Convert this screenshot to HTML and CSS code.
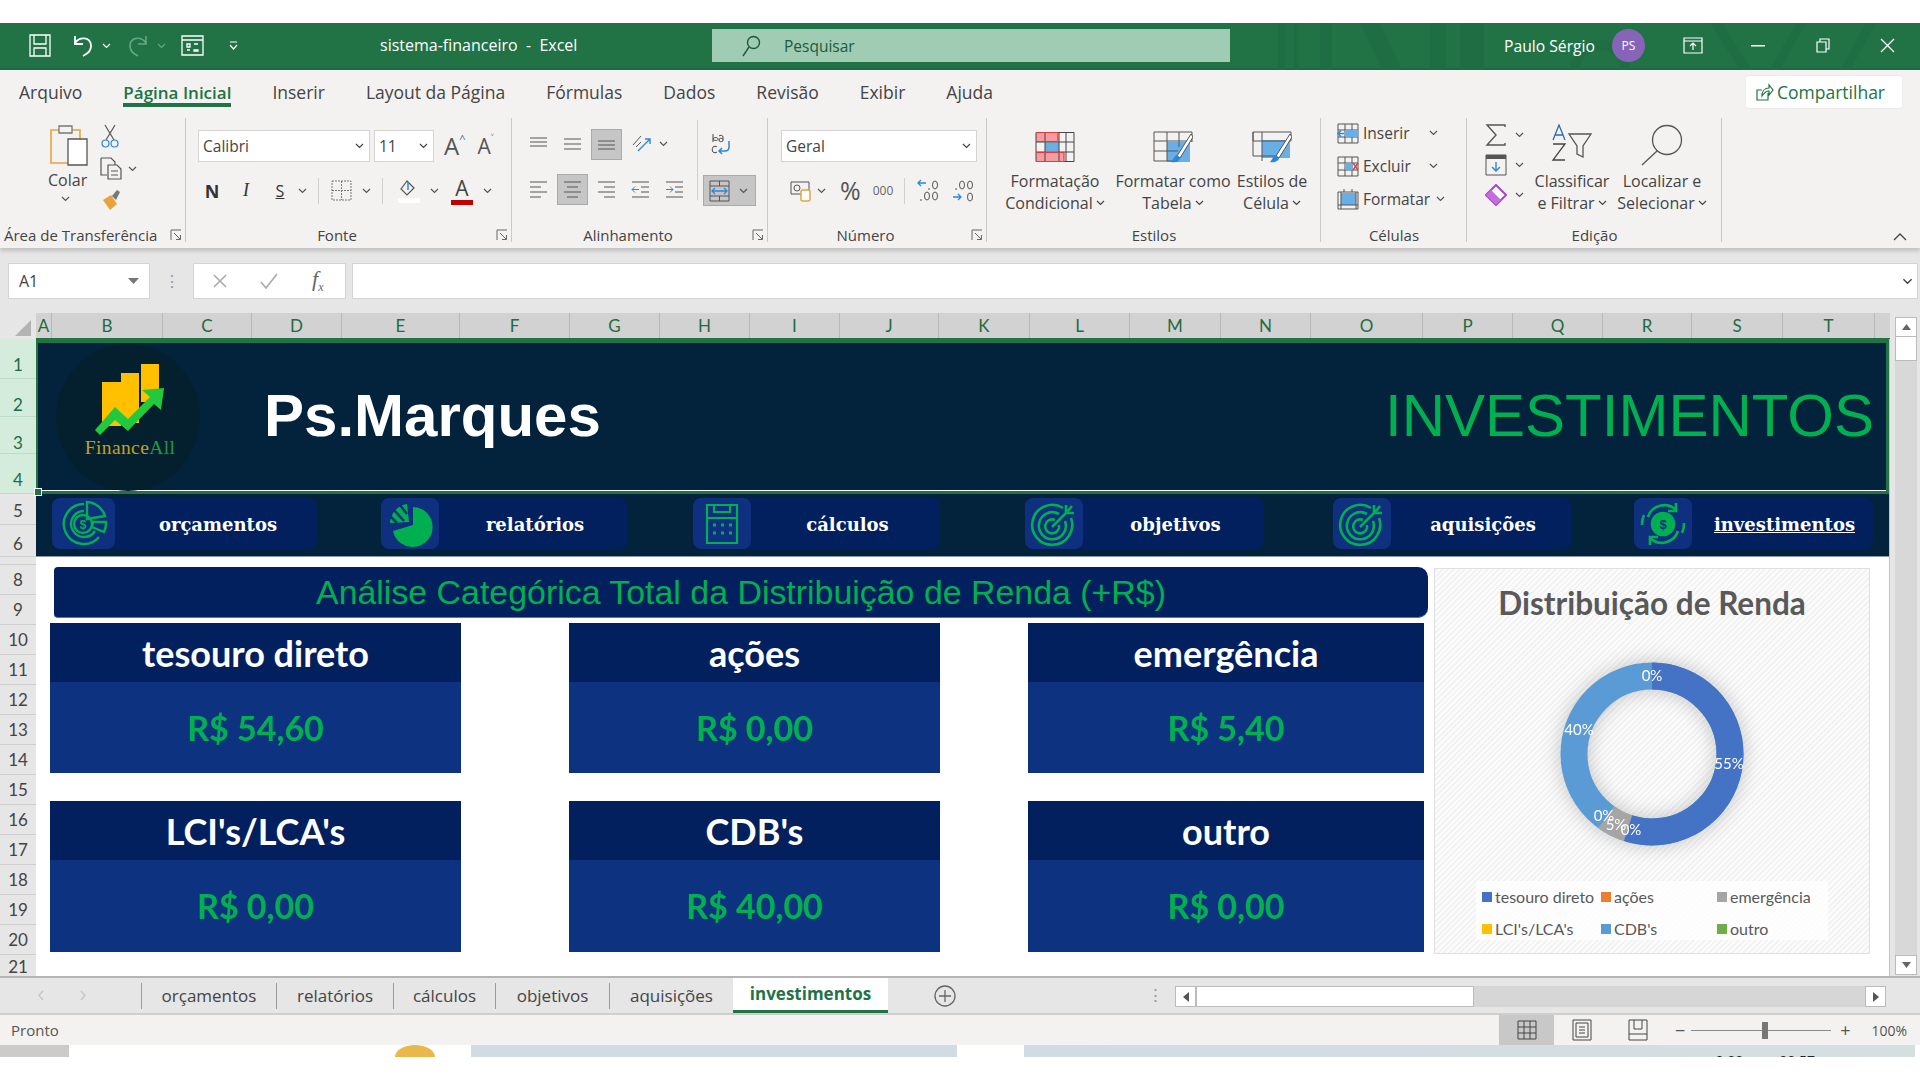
FILE: index.html
```html
<!DOCTYPE html>
<html lang="pt-BR">
<head>
  <meta charset="UTF-8">
  <title>sistema-financeiro - Excel</title>
  <link rel="stylesheet" href="styles.css">
</head>
<body>
  <svg class="sprite">
    <symbol id="car" viewBox="0 0 9 6"><path d="M1 1l3.5 3.5L8 1" fill="none" stroke="currentColor" stroke-width="1.2"/></symbol>
    <symbol id="launch" viewBox="0 0 12 12"><path d="M1 11V1h10M4 4l6 6M6 10.500h4.500V6" fill="none" stroke="#666" stroke-width="1"/></symbol>
    <symbol id="target" viewBox="0 0 48 48">
      <g fill="none" stroke="#00b050" stroke-width="2.600">
        <path d="M33 8a20 20 0 1 0 8 10"/>
        <path d="M29 14a13.500 13.500 0 1 0 6 7"/>
        <path d="M25 20a7 7 0 1 0 4 5"/>
        <path d="M22 27L38 11M36 5v8h8M38 11l4-5"/>
      </g>
    </symbol>
  </svg>

  <div class="topgap"></div>

  <header class="titlebar">
    <svg class="tb-pattern" viewBox="0 0 650 47" width="650" height="47">
      <g fill="#1f6e43">
        <rect x="8" y="0" width="7" height="47"/><rect x="24" y="0" width="5" height="47"/><rect x="50" y="0" width="12" height="47"/>
        <path d="M90 0h20l22 47h-20zM160 0h16v47h-16zM190 0h24v47h-24z"/>
        <path d="M300 47a30 30 0 0 1 60 0h-10a20 20 0 0 0-40 0zM440 0h12l30 47h-12zM500 47l26-47h10l-26 47zM570 47l26-47h10l-26 47z"/>
      </g>
    </svg>
    <div class="qat">
      <svg class="qa-save" width="22" height="23" viewBox="0 0 22 23" fill="none" stroke="#fff" stroke-width="1.300"><path d="M1 1h20v21H1zM5 1v9h12V1M5 22v-8h12v8"/></svg>
      <svg class="qa-undo" width="22" height="23" viewBox="0 0 22 23" fill="none" stroke="#fff" stroke-width="1.800"><path d="M3 2v8h8M3 9c5-7 15-6 16 2 .6 5-4 9-8 11"/></svg>
      <svg class="qa-car" width="9" height="6"><use href="#car"/></svg>
      <svg class="qa-redo" width="22" height="23" viewBox="0 0 22 23" fill="none" stroke="#64a783" stroke-width="1.600"><path d="M19 2v8h-8M19 9C14 2 4 3 3 11c-.6 5 4 9 8 11"/></svg>
      <svg class="qa-car dim" width="9" height="6"><use href="#car"/></svg>
      <svg class="qa-form" width="23" height="21" viewBox="0 0 23 21" fill="none" stroke="#fff" stroke-width="1.300"><path d="M1 1h21v19H1zM1 5h21M6 9h3v3H6zM13 9h4M6 15h3M13 15h4v1h-4z"/></svg>
      <svg class="qa-more" width="9" height="10" viewBox="0 0 9 10" fill="none" stroke="#fff" stroke-width="1.200"><path d="M1 1h7M1 4l3.500 4L8 4"/></svg>
    </div>
    <div class="doc-name">sistema-financeiro&nbsp; -&nbsp; Excel</div>
    <div class="search">
      <svg width="20" height="22" viewBox="0 0 20 22" fill="none" stroke="#1d5a3a" stroke-width="1.400"><circle cx="12.500" cy="7.500" r="6"/><path d="M8 12l-6 9"/></svg>
      <span>Pesquisar</span>
    </div>
    <div class="user">
      <span class="user-name">Paulo Sérgio</span>
      <span class="avatar">PS</span>
    </div>
    <div class="winbtn"><svg width="20" height="17" viewBox="0 0 20 17" fill="none" stroke="#fff" stroke-width="1.200"><path d="M1 1h18v15H1zM1 4h18M10 13V6M7 9l3-3 3 3"/></svg></div>
    <div class="winbtn"><svg width="14" height="2"><rect width="14" height="1.500" fill="#fff"/></svg></div>
    <div class="winbtn"><svg width="14" height="15" viewBox="0 0 14 15" fill="none" stroke="#fff" stroke-width="1.200"><path d="M1 4h9v10H1zM4 4V1h9v10h-3"/></svg></div>
    <div class="winbtn"><svg width="15" height="15" viewBox="0 0 15 15" fill="none" stroke="#fff" stroke-width="1.300"><path d="M1 1l13 13M14 1L1 14"/></svg></div>
  </header>

  <nav class="ribbon-tabs">
    <span class="rtab">Arquivo</span>
    <span class="rtab active">Página Inicial</span>
    <span class="rtab">Inserir</span>
    <span class="rtab">Layout da Página</span>
    <span class="rtab">Fórmulas</span>
    <span class="rtab">Dados</span>
    <span class="rtab">Revisão</span>
    <span class="rtab">Exibir</span>
    <span class="rtab">Ajuda</span>
    <button class="share">
      <svg width="19" height="19" viewBox="0 0 19 19" fill="none" stroke="#217346" stroke-width="1.200"><path d="M13 10v7H2V7h5M7 13c0-5 3-8 7-8V2l4 5-4 5V8c-3 0-5 2-7 5z"/></svg>
      Compartilhar
    </button>
  </nav>

  <section class="ribbon">
    <div class="group g-clip">
      <div class="g-body">
        <div class="paste">
          <svg width="38" height="42" viewBox="0 0 38 42" fill="none"><path d="M1 6h29v33H1z" stroke="#e8a33c" stroke-width="1.600"/><path d="M9 2h13v7H9z" fill="#f3f2f1" stroke="#777" stroke-width="1.300"/><path d="M18 15h19v26H18z" fill="#fff" stroke="#555" stroke-width="1.300"/></svg>
          <span>Colar</span>
          <svg class="car" width="9" height="6"><use href="#car"/></svg>
        </div>
        <div class="clip-tools">
          <svg width="18" height="24" viewBox="0 0 18 24" fill="none" stroke="#555" stroke-width="1.200"><path d="M4 1l9 15M14 1L5 16"/><circle cx="4.500" cy="19.500" r="3.500" stroke="#2b88d8"/><circle cx="13.500" cy="19.500" r="3.500" stroke="#2b88d8"/></svg>
          <div class="copy-row">
            <svg width="22" height="23" viewBox="0 0 22 23" fill="none" stroke="#555" stroke-width="1.200"><path d="M1 1h10l4 4v3M1 1v17h6M8 8h9l4 4v10H8zM11 14h7M11 18h7"/></svg>
            <svg class="car" width="9" height="6"><use href="#car"/></svg>
          </div>
          <svg width="22" height="22" viewBox="0 0 22 22"><path d="M3 11l8-5 6 9-7 6z" fill="#e8a33c"/><path d="M12 7l5-6 3 2-4 8z" fill="#777"/></svg>
        </div>
      </div>
      <div class="g-label lab-launch"><span>Área de Transferência</span><svg class="launcher" width="12" height="12"><use href="#launch"/></svg></div>
    </div>

    <div class="group g-font">
      <div class="g-body col">
        <div class="row">
          <div class="combo c-font">Calibri<svg width="9" height="6"><use href="#car"/></svg></div>
          <div class="combo c-size">11<svg width="9" height="6"><use href="#car"/></svg></div>
          <span class="grow-a">A<sup>^</sup></span>
          <span class="shrink-a">A<sup>˅</sup></span>
        </div>
        <div class="row row-font2">
          <b class="fmt">N</b>
          <i class="fmt it">I</i>
          <span class="fmt un">S</span>
          <svg class="car" width="9" height="6"><use href="#car"/></svg>
          <span class="vsep vs-border"></span>
          <svg width="21" height="21" viewBox="0 0 21 21" fill="none" stroke="#777" stroke-width="1" stroke-dasharray="2 1"><path d="M1 1h19v19H1zM10.500 1v19M1 10.500h19"/></svg>
          <svg class="car" width="9" height="6"><use href="#car"/></svg>
          <span class="vsep vs-fill"></span>
          <svg width="22" height="24" viewBox="0 0 22 24" fill="none"><path d="M9 2L3 10l6 6 7-7z" stroke="#555" stroke-width="1.200"/><path d="M10 3v8" stroke="#2b88d8" stroke-width="1.500"/><rect x="0" y="19" width="22" height="5" fill="#fff"/></svg>
          <svg class="car" width="9" height="6"><use href="#car"/></svg>
          <span class="font-color">A</span>
          <svg class="car" width="9" height="6"><use href="#car"/></svg>
        </div>
      </div>
      <div class="g-label lab-launch"><span>Fonte</span><svg class="launcher" width="12" height="12"><use href="#launch"/></svg></div>
    </div>

    <div class="group g-align">
      <div class="g-body align-body">
        <div class="col align-left">
          <div class="row row-align">
            <span class="cell"><svg width="19" height="14" viewBox="0 0 19 14" stroke="#555"><path d="M1 1h17M1 5h17M1 9h17"/></svg></span>
            <span class="cell"><svg width="19" height="14" viewBox="0 0 19 14" stroke="#555"><path d="M1 2h17M1 7h17M1 12h17"/></svg></span>
            <span class="cell on"><svg width="19" height="14" viewBox="0 0 19 14" stroke="#555"><path d="M1 4h17M1 8h17M1 12h17"/></svg></span>
            <span class="cell"><svg width="22" height="22" viewBox="0 0 22 22" fill="none" stroke="#555"><path d="M3 12l8-9M6 14l5-5"/><path d="M8 18L20 6M15 6h5v5" stroke="#2b88d8" stroke-width="1.400"/></svg></span>
            <svg class="car" width="9" height="6"><use href="#car"/></svg>
          </div>
          <div class="row row-align">
            <span class="cell"><svg width="19" height="18" viewBox="0 0 19 18" stroke="#555"><path d="M1 2h17M1 7h11M1 12h17M1 17h11"/></svg></span>
            <span class="cell on"><svg width="19" height="18" viewBox="0 0 19 18" stroke="#555"><path d="M1 2h17M4 7h11M1 12h17M4 17h11"/></svg></span>
            <span class="cell"><svg width="19" height="18" viewBox="0 0 19 18" stroke="#555"><path d="M1 2h17M7 7h11M1 12h17M7 17h11"/></svg></span>
            <span class="cell"><svg width="19" height="18" viewBox="0 0 19 18" stroke="#555" fill="none"><path d="M1 2h17M10 7h8M10 12h8M1 17h17"/><path d="M8 9.500H1M4 6.500l-3 3 3 3" stroke="#2b88d8"/></svg></span>
            <span class="cell"><svg width="19" height="18" viewBox="0 0 19 18" stroke="#555" fill="none"><path d="M1 2h17M10 7h8M10 12h8M1 17h17"/><path d="M1 9.500h7M5 6.500l3 3-3 3" stroke="#2b88d8"/></svg></span>
          </div>
        </div>
        <span class="subsep"></span>
        <div class="col align-right">
          <svg class="wrap-ic" width="22" height="26" viewBox="0 0 22 26" fill="none"><path d="M3 1v8M3 6c1-2 5-2 5 0s-4 2-5 0M9 3c1-1 4-1 4 1v4c-2 1-4 1-4-1s2-2 4-1M3 14c1-1 3-1 4 0M7 19c-1 1-3 1-4 0s-1-3 0-5" stroke="#444"/><path d="M19 8v6c0 3-2 4-4 4H9M12 15l-3 3 3 3" stroke="#2b88d8" stroke-width="1.500"/></svg>
          <div class="merge">
            <svg width="21" height="22" viewBox="0 0 21 22" fill="none"><path d="M1 1h19v20H1zM1 6h19M1 16h19M10.500 1v5M10.500 16v5" stroke="#555"/><path d="M3 11h15M6 8l-3 3 3 3M15 8l3 3-3 3" stroke="#2b88d8" stroke-width="1.300"/></svg>
            <svg class="car" width="9" height="6"><use href="#car"/></svg>
          </div>
        </div>
      </div>
      <div class="g-label lab-launch"><span>Alinhamento</span><svg class="launcher" width="12" height="12"><use href="#launch"/></svg></div>
    </div>

    <div class="group g-num">
      <div class="g-body col">
        <div class="row">
          <div class="combo c-num">Geral<svg width="9" height="6"><use href="#car"/></svg></div>
        </div>
        <div class="row row-num2">
          <svg width="22" height="22" viewBox="0 0 22 22" fill="none"><path d="M1 2h18v12H1z" stroke="#555"/><circle cx="7" cy="8" r="3" stroke="#555"/><rect x="11" y="10" width="9" height="11" rx="2" fill="#fff" stroke="#e8a33c" stroke-width="1.500"/></svg>
          <svg class="car" width="9" height="6"><use href="#car"/></svg>
          <span class="pct">%</span>
          <span class="mil">000</span>
          <span class="vsep"></span>
          <svg width="24" height="24" viewBox="0 0 24 24" fill="none" stroke="#555"><path d="M9 4H1M4 1L1 4l3 3" stroke="#2b88d8" stroke-width="1.300"/><path d="M12 9v2"/><ellipse cx="18" cy="6" rx="2.500" ry="4"/><path d="M4 20v2"/><ellipse cx="10" cy="17" rx="2.500" ry="4"/><ellipse cx="18" cy="17" rx="2.500" ry="4"/></svg>
          <svg class="dec-ic" width="24" height="24" viewBox="0 0 24 24" fill="none" stroke="#555"><path d="M4 9v2"/><ellipse cx="10" cy="6" rx="2.500" ry="4"/><ellipse cx="18" cy="6" rx="2.500" ry="4"/><ellipse cx="18" cy="18" rx="2.500" ry="4"/><path d="M1 18h8M6 15l3 3-3 3" stroke="#2b88d8" stroke-width="1.300"/></svg>
        </div>
      </div>
      <div class="g-label lab-launch"><span>Número</span><svg class="launcher" width="12" height="12"><use href="#launch"/></svg></div>
    </div>

    <div class="group g-styles">
      <div class="g-body big-row">
        <div class="bigbtn b-cond">
          <svg width="40" height="31" viewBox="0 0 40 31" fill="none"><rect x="1" y="1" width="22" height="9" fill="#f59ca0"/><rect x="1" y="21" width="28" height="9" fill="#f59ca0"/><rect x="10" y="11" width="14" height="9" fill="#6aaee6"/><path d="M1 1h38v29H1zM1 10.500h38M1 20.500h38M10 1v29M24 1v29M31 1v29" stroke="#444"/><path d="M1 1h22v9H1M1 21h28v9H1" stroke="#e23b3b" stroke-width="1.200"/></svg>
          <span>Formatação</span><span>Condicional <svg width="9" height="6"><use href="#car"/></svg></span>
        </div>
        <div class="bigbtn b-table">
          <svg width="40" height="32" viewBox="0 0 40 32" fill="none"><rect x="14" y="11" width="23" height="20" fill="#6aaee6"/><path d="M1 1h38M1 10h38M1 20h24M1 1v29h24M14 1v29M26 1v15M39 1v10" stroke="#555"/><path d="M38 3L24 25l3 2L40 6z" fill="#fff" stroke="#555"/><path d="M24 24c-3 1-4 5-6 7 4 1 9-1 9-4z" fill="#2b88d8"/></svg>
          <span>Formatar como</span><span>Tabela <svg width="9" height="6"><use href="#car"/></svg></span>
        </div>
        <div class="bigbtn b-cell">
          <svg width="40" height="32" viewBox="0 0 40 32" fill="none"><rect x="10" y="9" width="28" height="18" fill="#6aaee6"/><path d="M1 1h38v9H1zM1 1v24h22M10 1v29" stroke="#555"/><path d="M38 3L24 25l3 2L40 6z" fill="#fff" stroke="#555"/><path d="M24 24c-3 1-4 5-6 7 4 1 9-1 9-4z" fill="#2b88d8"/></svg>
          <span>Estilos de</span><span>Célula <svg width="9" height="6"><use href="#car"/></svg></span>
        </div>
      </div>
      <div class="g-label"><span>Estilos</span></div>
    </div>

    <div class="group g-cells">
      <div class="g-body cells-body">
        <div class="cell-act">
          <svg width="22" height="21" viewBox="0 0 22 21" fill="none"><path d="M1 1h20v19H1zM1 7h20M1 14h20M8 1v19M15 1v19" stroke="#555"/><rect x="8" y="7" width="13" height="7" fill="#6aaee6"/><path d="M7 10.500H1M4 7.500l-3 3 3 3" stroke="#2b88d8" stroke-width="1.300"/></svg>
          <span>Inserir</span><svg class="car" width="9" height="6"><use href="#car"/></svg>
        </div>
        <div class="cell-act">
          <svg width="22" height="21" viewBox="0 0 22 21" fill="none"><path d="M1 1h20v19H1zM1 7h20M1 14h20M8 1v19M15 1v19" stroke="#555"/><rect x="8" y="7" width="8" height="7" fill="#6aaee6"/><path d="M16 7l5 7M21 7l-5 7" stroke="#e23b3b" stroke-width="1.300"/></svg>
          <span>Excluir</span><svg class="car" width="9" height="6"><use href="#car"/></svg>
        </div>
        <div class="cell-act">
          <svg width="22" height="22" viewBox="0 0 22 22" fill="none"><rect x="4" y="5" width="15" height="12" fill="#6aaee6"/><path d="M1 4h20v17H1zM1 17h20M7 1v3M15 1v3M4 4v17M19 4v17" stroke="#555"/></svg>
          <span>Formatar</span><svg class="car" width="9" height="6"><use href="#car"/></svg>
        </div>
      </div>
      <div class="g-label"><span>Células</span></div>
    </div>

    <div class="group g-edit">
      <div class="g-body edit-body">
        <div class="edit-small">
          <div class="row"><svg width="22" height="22" viewBox="0 0 22 22" fill="none" stroke="#555" stroke-width="1.400"><path d="M20 3V1H2l9 10-9 10h18v-2"/></svg><svg class="car" width="9" height="6"><use href="#car"/></svg></div>
          <div class="row"><svg width="22" height="22" viewBox="0 0 22 22" fill="none"><path d="M1 1h20v20H1z" stroke="#555"/><rect x="1" y="1" width="20" height="4" fill="#555"/><path d="M11 8v9M7 13l4 4 4-4" stroke="#2b88d8" stroke-width="1.400"/></svg><svg class="car" width="9" height="6"><use href="#car"/></svg></div>
          <div class="row"><svg width="22" height="22" viewBox="0 0 22 22"><path d="M11 1l10 10-10 10L1 11z" fill="#fff" stroke="#a349c7" stroke-width="2"/><path d="M6 6l10 10-5 5L1 11z" fill="#c66ee0"/></svg><svg class="car" width="9" height="6"><use href="#car"/></svg></div>
        </div>
        <div class="bigbtn b-sort">
          <svg width="42" height="38" viewBox="0 0 42 38" fill="none"><path d="M2 16L8 1l6 15M4 11h8" stroke="#2b6cb0" stroke-width="1.300"/><path d="M2 20h12L2 36h12" stroke="#444" stroke-width="1.300"/><path d="M18 10h22l-8 12v11l-6-3v-8z" stroke="#555" stroke-width="1.300"/></svg>
          <span>Classificar</span><span>e Filtrar <svg width="9" height="6"><use href="#car"/></svg></span>
        </div>
        <div class="bigbtn b-find">
          <svg width="42" height="42" viewBox="0 0 42 42" fill="none" stroke="#555" stroke-width="1.300"><circle cx="26" cy="16" r="14.500"/><path d="M16 27L1 41"/></svg>
          <span>Localizar e</span><span>Selecionar <svg width="9" height="6"><use href="#car"/></svg></span>
        </div>
      </div>
      <div class="g-label"><span>Edição</span></div>
    </div>

    <svg class="collapse" width="14" height="9" viewBox="0 0 14 9" fill="none" stroke="#444" stroke-width="1.300"><path d="M1 8l6-6 6 6"/></svg>
  </section>

  <section class="formula-area">
    <div class="namebox">A1<svg width="11" height="6" viewBox="0 0 11 6"><path d="M0 0h11L5.500 6z" fill="#777"/></svg></div>
    <div class="dots">⋮</div>
    <div class="fx-box">
      <svg width="16" height="16" viewBox="0 0 16 16" stroke="#aaa" stroke-width="1.600"><path d="M2 2l12 12M14 2L2 14"/></svg>
      <svg width="18" height="16" viewBox="0 0 18 16" fill="none" stroke="#aaa" stroke-width="1.600"><path d="M1 9l5 6L17 1"/></svg>
      <i>f<sub>x</sub></i>
    </div>
    <div class="formula-input">
      <svg width="11" height="7"><use href="#car"/></svg>
    </div>
  </section>

  <section class="grid-head">
    <div class="corner"><svg width="16" height="16"><path d="M16 0v16H0z" fill="#b3b3b3"/></svg></div>
    <div class="cols">
      <span>A</span><span>B</span><span>C</span><span>D</span><span>E</span><span>F</span><span>G</span>
      <span>H</span><span>I</span><span>J</span><span>K</span><span>L</span><span>M</span><span>N</span>
      <span>O</span><span>P</span><span>Q</span><span>R</span><span>S</span><span>T</span><span class="blank"></span>
    </div>
  </section>

  <div class="workbook">
    <aside class="rownums">
      <span class="sel r40">1</span><span class="sel r38">2</span><span class="sel r37">3</span><span class="sel r40">4</span>
      <span class="r31">5</span><span class="r32">6</span><span class="r8"></span>
      <span>8</span><span>9</span><span>10</span><span>11</span><span>12</span><span>13</span><span>14</span>
      <span>15</span><span>16</span><span>17</span><span>18</span><span>19</span><span>20</span><span class="r21">21</span>
    </aside>

    <main class="sheet">
      <div class="hero">
        <div class="logo">
          <svg width="74" height="72" viewBox="0 0 74 72">
            <rect x="8" y="18" width="19" height="44" fill="#ffc000"/>
            <rect x="27" y="9" width="18" height="50" fill="#ffc000"/>
            <rect x="47" y="0" width="18" height="38" fill="#ffc000"/>
            <path d="M1 66l20-23 13 12 22-22-8-7 22-2-3 22-7-6-26 27-13-11-15 15z" fill="#22c93c"/>
          </svg>
          <div class="logo-name">Finance<span>All</span></div>
        </div>
        <div class="brand">Ps.Marques</div>
        <div class="hero-title">INVESTIMENTOS</div>
      </div>

      <div class="navband">
        <a class="navbtn n1">
          <span class="nav-ic"><svg width="48" height="48" viewBox="0 0 48 48" fill="none" stroke="#00b050" stroke-width="2.400"><path d="M24 4a20 20 0 1 0 15 33"/><path d="M24 11a13 13 0 1 0 11 20"/><circle cx="23" cy="24" r="9"/><path d="M27 2a20 20 0 0 1 18 14l-18 3zM46 22a20 20 0 0 1-2 10l-12-5 1-5z"/><text x="23" y="29" class="coin">$</text></svg></span>
          <span class="nav-txt">orçamentos</span>
        </a>
        <a class="navbtn n2">
          <span class="nav-ic"><svg width="46" height="46" viewBox="0 0 46 46"><path d="M26 6a20 20 0 1 1-20 24l20-6z" fill="#00b050"/><path d="M3 22a20 20 0 0 1 17-19l2 18z" fill="#00b050"/><path d="M7 9l10 11M3 15l7 7M13 4l7 9" stroke="#0f2f7f" stroke-width="2.500"/></svg></span>
          <span class="nav-txt">relatórios</span>
        </a>
        <a class="navbtn n3">
          <span class="nav-ic"><svg width="34" height="42" viewBox="0 0 34 42" fill="none" stroke="#00b050" stroke-width="2.200"><path d="M2 2h30v38H2zM2 15h30M9 2v7h16V2"/><path d="M8 22h3M16 22h3M24 22h3M8 30h3M16 30h3M24 30h3" stroke-width="3"/></svg></span>
          <span class="nav-txt">cálculos</span>
        </a>
        <a class="navbtn n4">
          <span class="nav-ic"><svg width="48" height="48"><use href="#target"/></svg></span>
          <span class="nav-txt">objetivos</span>
        </a>
        <a class="navbtn n5">
          <span class="nav-ic"><svg width="48" height="48"><use href="#target"/></svg></span>
          <span class="nav-txt">aquisições</span>
        </a>
        <a class="navbtn n6">
          <span class="nav-ic"><svg width="46" height="46" viewBox="0 0 46 46" fill="none" stroke="#00b050" stroke-width="2.600"><path d="M8 16a17 17 0 0 1 28-7"/><path d="M36 2v8h-8"/><path d="M38 30a17 17 0 0 1-28 7"/><path d="M10 44v-8h8"/><path d="M2 24a21 21 0 0 1 2-10M44 22a21 21 0 0 1-2 10"/><circle cx="23" cy="23" r="11" fill="#00b050"/><text x="23" y="28" class="coin dark">$</text></svg></span>
          <span class="nav-txt current">investimentos</span>
        </a>
      </div>

      <div class="content">
        <div class="analysis">
          <h2 class="banner">Análise Categórica Total da Distribuição de Renda (+R$)</h2>
          <div class="cards">
            <article class="card"><h3>tesouro direto</h3><p>R$ 54,60</p></article>
            <article class="card"><h3>ações</h3><p>R$ 0,00</p></article>
            <article class="card"><h3>emergência</h3><p>R$ 5,40</p></article>
            <article class="card"><h3>LCI's/LCA's</h3><p>R$ 0,00</p></article>
            <article class="card"><h3>CDB's</h3><p>R$ 40,00</p></article>
            <article class="card"><h3>outro</h3><p>R$ 0,00</p></article>
          </div>
        </div>

        <figure class="chart">
          <figcaption>Distribuição de Renda</figcaption>
          <svg class="donut" width="220" height="220" viewBox="0 0 220 220">
            <g fill="none" stroke-width="27" transform="rotate(-90 110 110)">
              <circle cx="110" cy="110" r="78" stroke="#5b9bd5" pathLength="100"/>
              <circle cx="110" cy="110" r="78" stroke="#4472c4" pathLength="100" stroke-dasharray="55 45"/>
              <circle cx="110" cy="110" r="78" stroke="#a5a5a5" pathLength="100" stroke-dasharray="5 95" stroke-dashoffset="-55"/>
            </g>
            <g class="donut-lbl">
              <text x="110" y="37">0%</text>
              <text x="187" y="125">55%</text>
              <text x="37" y="91">40%</text>
              <text x="62" y="177">0%</text>
              <text x="74" y="186">5%</text>
              <text x="89" y="191">0%</text>
            </g>
          </svg>
          <ul class="legend">
            <li><i class="s1"></i>tesouro direto</li>
            <li><i class="s2"></i>ações</li>
            <li><i class="s3"></i>emergência</li>
            <li><i class="s4"></i>LCI's/LCA's</li>
            <li><i class="s5"></i>CDB's</li>
            <li><i class="s6"></i>outro</li>
          </ul>
        </figure>
      </div>
      <span class="handle"></span>
    </main>

    <aside class="vscroll">
      <span class="sb-btn"><svg width="9" height="6"><path d="M0 6h9L4.500 0z" fill="#666"/></svg></span>
      <span class="sb-thumb"></span>
      <span class="sb-track"></span>
      <span class="sb-btn"><svg width="9" height="6"><path d="M0 0h9L4.500 6z" fill="#666"/></svg></span>
    </aside>
  </div>

  <section class="sheetbar">
    <div class="sheet-nav">
      <svg width="6" height="11" viewBox="0 0 6 11" fill="none" stroke="#c4c4c4" stroke-width="1.300"><path d="M5 1L1 5.500 5 10"/></svg>
      <svg width="6" height="11" viewBox="0 0 6 11" fill="none" stroke="#c4c4c4" stroke-width="1.300"><path d="M1 1l4 4.500L1 10"/></svg>
    </div>
    <div class="stab t1">orçamentos</div>
    <div class="stab t2">relatórios</div>
    <div class="stab t3">cálculos</div>
    <div class="stab t4">objetivos</div>
    <div class="stab t5">aquisições</div>
    <div class="stab active">investimentos</div>
    <div class="addsheet"><svg width="22" height="22" viewBox="0 0 22 22" fill="none" stroke="#666" stroke-width="1.300"><circle cx="11" cy="11" r="10"/><path d="M11 5v12M5 11h12"/></svg></div>
    <div class="split-dots">⋮</div>
    <div class="hscroll">
      <span class="hs-btn"><svg width="6" height="10"><path d="M6 0v10L0 5z" fill="#555"/></svg></span>
      <span class="hs-thumb"></span>
      <span class="hs-track"></span>
      <span class="hs-btn"><svg width="6" height="10"><path d="M0 0v10l6-5z" fill="#555"/></svg></span>
    </div>
  </section>

  <footer class="statusbar">
    <span class="status-txt">Pronto</span>
    <span class="view on"><svg width="20" height="20" viewBox="0 0 20 20" fill="none" stroke="#444"><path d="M1 1h18v18H1zM1 7h18M1 13h18M7 1v18M13 1v18"/></svg></span>
    <span class="view"><svg width="20" height="22" viewBox="0 0 20 22" fill="none" stroke="#444"><path d="M1 1h18v20H1zM4 4h12v14H4zM7 8h6M7 11h6M7 14h6"/></svg></span>
    <span class="view"><svg width="20" height="22" viewBox="0 0 20 22" fill="none" stroke="#444"><path d="M1 1h18v20H1zM1 15h18M6 1v9h8V1"/></svg></span>
    <div class="zoom">
      <span>−</span>
      <span class="slider"><i></i></span>
      <span class="zoom-plus">+</span>
    </div>
    <span class="zoom-pct">100%</span>
  </footer>

  <div class="taskbar">
    <span class="tk-a"></span>
    <span class="tk-b"><i class="dome"></i></span>
    <span class="tk-c"></span>
    <span class="tk-d"></span>
    <span class="tk-e"><b>0:00</b><b>09:57</b></span>
  </div>
</body>
</html>
```

FILE: styles.css
```css
* { box-sizing: border-box; }
html, body { margin: 0; }
body {
  width: 1920px;
  height: 1080px;
  overflow: hidden;
  background: #fff;
  font-family: "Open Sans", "Noto Sans", sans-serif;
  color: #444;
}
svg { display: block; flex: none; }
.sprite { display: none; }
.car { color: #555; }
.topgap { height: 23px; }

/* title bar */
.titlebar {
  position: relative;
  height: 47px;
  background: #217346;
  display: flex;
  align-items: center;
  color: #fff;
  border-bottom: 2px solid #1e6a40;
}
.tb-pattern { position: absolute; right: 0; top: 0; }
.titlebar > div, .titlebar > span { position: relative; }
.qat { width: 380px; display: flex; align-items: center; padding-left: 29px; color: #fff; }
.qa-undo { margin-left: 21px; }
.qa-car { margin-left: 8px; }
.qa-car.dim { color: #64a783; }
.qa-redo { margin-left: 16px; }
.qa-form { margin-left: 15px; }
.qa-more { margin-left: 25px; }
.doc-name { width: 332px; font-size: 16px; margin-top: -2px; }
.search {
  width: 518px;
  height: 33px;
  background: #a0ccb4;
  display: flex;
  align-items: center;
  padding-left: 29px;
  gap: 23px;
  font-size: 15.5px;
  color: #1d5a3a;
}
.user { width: 430px; display: flex; align-items: center; justify-content: flex-end; padding-right: 15px; }
.user-name { font-size: 15.7px; margin-right: 17px; }
.avatar {
  width: 33px;
  height: 33px;
  border-radius: 50%;
  background: #8764b8;
  font-size: 12px;
  display: flex;
  align-items: center;
  justify-content: center;
}
.winbtn { width: 65px; display: flex; justify-content: center; }

/* ribbon */
.ribbon-tabs {
  position: relative;
  height: 46px;
  background: #f3f2f1;
  display: flex;
  align-items: center;
  padding: 0 0 2px 19px;
  gap: 41px;
  font-size: 17.500px;
  color: #444;
}
.rtab { position: relative; }
.rtab.active { color: #217346; font-weight: 600; font-size: 17px; }
.rtab.active::after {
  content: "";
  position: absolute;
  left: 0;
  right: 0;
  bottom: -3px;
  height: 4px;
  background: #217346;
}
.share {
  position: absolute;
  left: 1746px;
  top: 6px;
  width: 156px;
  height: 32px;
  background: #fff;
  border: 0;
  border-radius: 2px;
  box-shadow: 0 0 2px #ddd;
  color: #217346;
  font: 17.500px "Open Sans", sans-serif;
  display: flex;
  align-items: center;
  padding-left: 9px;
  gap: 3px;
  white-space: nowrap;
}
.ribbon {
  position: relative;
  height: 132px;
  background: #f3f2f1;
  display: flex;
  box-shadow: 0 3px 4px rgba(0,0,0,.16);
  z-index: 2;
}
.group {
  position: relative;
  display: flex;
  flex-direction: column;
  padding-top: 2px;
}
.group::after {
  content: "";
  position: absolute;
  right: 0;
  top: 2px;
  bottom: 6px;
  width: 1px;
  background: #c9c9c9;
}
.g-clip { width: 186px; }
.g-font { width: 326px; }
.g-align { width: 256px; }
.g-num { width: 219px; }
.g-styles { width: 334px; }
.g-cells { width: 146px; }
.g-edit { width: 255px; }
.g-body { flex: 1; padding-top: 12px; }
.g-label {
  height: 24px;
  font-size: 15px;
  line-height: 22px;
  color: #444;
  display: flex;
  justify-content: center;
  position: relative;
}
.lab-launch { padding-right: 24px; }
.launcher { position: absolute; right: 4px; top: 5px; }
.col { display: flex; flex-direction: column; gap: 13px; }
.row { display: flex; align-items: center; height: 32px; }

.g-clip .g-body { display: flex; padding: 6px 0 0 50px; }
.g-clip .g-label { justify-content: flex-start; padding-left: 4px; white-space: nowrap; }
.paste { width: 50px; display: flex; flex-direction: column; align-items: flex-start; font-size: 16px; }
.paste span { margin: 3px 0 0 -2px; }
.paste .car { margin: 5px 0 0 11px; }
.clip-tools { display: flex; flex-direction: column; gap: 9px; }
.clip-tools > svg:first-child { margin-left: 1px; }
.copy-row { display: flex; align-items: center; gap: 6px; }

.g-font .g-body { padding-left: 12px; }
.combo {
  height: 32px;
  background: #fff;
  border: 1px solid #d4d4d4;
  font: 15.500px "Open Sans", sans-serif;
  padding-left: 4px;
  line-height: 30px;
  display: flex;
  align-items: center;
  justify-content: space-between;
  padding-right: 5px;
}
.c-font { width: 172px; }
.c-size { width: 60px; margin-left: 4px; }
.c-num { width: 196px; }
.grow-a, .shrink-a { font-size: 24px; color: #555; line-height: 32px; }
.grow-a sup, .shrink-a sup { font-size: 11px; color: #2b6cb0; vertical-align: 12px; line-height: 0; }
.grow-a { margin-left: 10px; }
.shrink-a { margin-left: 12px; font-size: 21px; }
.row-font2 { height: 31px; }
.fmt { font-size: 18px; width: 18px; text-align: center; color: #333; font-family: "Liberation Serif", serif; }
b.fmt { font-family: "Open Sans", sans-serif; margin-left: 5px; }
.it { margin-left: 16px; }
.un { margin-left: 16px; text-decoration: underline; font-family: "Open Sans", sans-serif; font-size: 16px; }
.un + .car { margin-left: 9px; }
.vsep { width: 1px; height: 26px; background: #d0d0d0; margin: 0 11px; }
.row-font2 svg + .car { margin-left: 10px; }
.row-font2 .vs-border { margin-right: 12px; }
.row-font2 .vs-fill { margin-right: 15px; }
.font-color {
  margin-left: 12px;
  width: 22px;
  text-align: center;
  font-size: 21px;
  line-height: 23px;
  border-bottom: 5px solid #c00000;
  color: #444;
}
.font-color + .car { margin-left: 10px; }

.align-body { display: flex; padding-left: 11px; }
.align-left { width: 174px; }
.row-align { gap: 3px; height: 32px; }
.row-align:first-child { margin-top: -2px; }
.cell { width: 31px; height: 31px; display: flex; align-items: center; justify-content: center; }
.cell.on { background: #c6c6c6; border: 1px solid #aaa; }
.subsep { width: 1px; height: 80px; margin-top: -10px; background: #d0d0d0; }
.align-right { padding-left: 5px; align-items: flex-start; }
.wrap-ic { margin: 3px 0 0 7px; }
.merge {
  margin-top: 3px;
  width: 53px;
  height: 31px;
  background: #c6c6c6;
  border: 1px solid #aaa;
  display: flex;
  align-items: center;
  gap: 9px;
  padding-left: 5px;
}

.g-num .g-body { padding-left: 13px; }
.row-num2 { padding-left: 9px; height: 31px; }
.row-num2 .car { margin-left: 5px; }
.pct { font-size: 25px; color: #555; margin-left: 14px; line-height: 31px; }
.mil { font-size: 12px; color: #666; margin-left: 12px; }
.row-num2 .vsep { margin: 0 12px 0 11px; }
.dec-ic { margin-left: 11px; }

.big-row { display: flex; padding-top: 10px; }
.g-styles .big-row { padding-left: 16px; }
.bigbtn {
  display: flex;
  flex-direction: column;
  align-items: center;
  font-size: 16px;
  line-height: 22px;
  color: #444;
  white-space: nowrap;
}
.bigbtn > svg { height: 38px; margin-bottom: 4px; }
.bigbtn > span { display: flex; align-items: center; gap: 3px; }
.b-cond { width: 104px; }
.b-table { width: 122px; margin-left: 5px; }
.b-cell { width: 76px; margin-left: 0; }

.cells-body { padding: 4px 0 0 16px; display: flex; flex-direction: column; gap: 11px; }
.cell-act { display: flex; align-items: center; height: 22px; font-size: 15.500px; }
.cell-act span { margin: 0 0 0 4px; width: 60px; white-space: nowrap; }
.cell-act:last-child span { width: 67px; }
.cell-act .car { margin-left: 6px; }

.edit-body { display: flex; padding: 6px 0 0 18px; }
.edit-small { width: 46px; display: flex; flex-direction: column; gap: 8px; }
.edit-small .row { height: 22px; gap: 8px; }
.b-sort { width: 78px; margin-left: 2px; }
.b-find { width: 90px; margin-left: 6px; }
.b-sort > svg { height: 38px; margin-bottom: 8px; }
.b-find > svg { height: 42px; margin-bottom: 4px; }
.collapse { position: absolute; left: 1893px; top: 116px; }

/* formula bar */
.formula-area {
  height: 65px;
  background: #e6e6e6;
  display: flex;
  padding: 15px 0 0 8px;
}
.namebox {
  width: 142px;
  height: 36px;
  background: #fff;
  border: 1px solid #d4d4d4;
  font-size: 16px;
  line-height: 34px;
  padding: 0 10px;
  display: flex;
  align-items: center;
  justify-content: space-between;
}
.dots { width: 43px; text-align: center; font-size: 16px; line-height: 36px; color: #999; }
.fx-box {
  width: 153px;
  height: 36px;
  background: #fff;
  border: 1px solid #d4d4d4;
  display: flex;
  align-items: center;
  padding-left: 18px;
  gap: 32px;
}
.fx-box i { font: italic 22px "Liberation Serif", serif; color: #666; margin-left: 2px; }
.fx-box sub { font-size: 12px; }
.formula-input {
  width: 1566px;
  margin-left: 6px;
  height: 36px;
  background: #fff;
  border: 1px solid #d4d4d4;
  display: flex;
  align-items: center;
  justify-content: flex-end;
  padding-right: 4px;
}

/* grid headers */
.grid-head { height: 26px; display: flex; background: #e6e6e6; }
.corner { width: 36px; display: flex; align-items: flex-end; justify-content: flex-end; padding: 0 5px 3px 0; }
.cols {
  flex: 1;
  display: grid;
  grid-template-columns: 16px 111px 89px 90px 118px 110px 90px 90px 90px 99px 91px 100px 91px 90px 112px 90px 90px 89px 91px 92px 15px;
  background: #d2d2d2;
  margin-right: 30px;
  border-bottom: 1px solid #217346;
}
.cols span {
  border-right: 1px solid #b8b8b8;
  color: #1f6b42;
  font: 17px/25px "Lato", sans-serif;
  text-align: center;
}
.cols .blank { border: 0; }

/* sheet */
.workbook { display: flex; height: 637px; }
.rownums { width: 36px; background: #e6e6e6; overflow: hidden; flex: none; }
.rownums span {
  display: block;
  height: 30px;
  text-align: center;
  font: 17px/30px "Lato", sans-serif;
  color: #444;
  border-bottom: 1px solid #cfcfcf;
}
.rownums .sel { background: #d3ecdc; color: #1f6b42; border-bottom-color: #bcdcc8; padding-top: 7px; line-height: 38px; overflow: hidden; }
.rownums .r40 { height: 40px; }
.rownums .r38 { height: 38px; }
.rownums .r37 { height: 37px; }
.rownums .r31 { height: 31px; line-height: 34px; }
.rownums .r32 { height: 32px; line-height: 38px; }
.rownums .r8 { height: 8px; }
.rownums .r21 { height: 21px; line-height: 24px; border: 0; overflow: hidden; }

.sheet { position: relative; width: 1854px; flex: none; background: #fff; border-right: 1px solid #c4c4c4; }
.hero {
  height: 155px;
  background: #03223c;
  border: 3px solid #217346;
  border-top-width: 4px;
  border-left-width: 2px;
  box-shadow: inset 0 -1px 0 #fff;
  display: flex;
  align-items: center;
}
.logo {
  width: 144px;
  height: 147px;
  margin: 0 0 0 18px;
  border-radius: 50%;
  background: #04202f;
  display: flex;
  flex-direction: column;
  align-items: center;
  padding-top: 20px;
  flex: none;
}
.logo svg { margin-left: 6px; }
.logo-name { font: 19.500px "Liberation Serif", serif; color: #c4a11f; margin: 1px 0 0 4px; letter-spacing: .4px; }
.logo-name span { color: #1e9a45; }
.brand { margin: -4px 0 0 64px; font: bold 60px "Liberation Sans", sans-serif; color: #fff; }
.hero-title { margin: -4px 12px 0 auto; font: 60px "Liberation Sans", sans-serif; color: #00b050; }
.handle {
  position: absolute;
  left: -2px;
  top: 149px;
  width: 8px;
  height: 8px;
  background: #217346;
  border: 1px solid #fff;
}

.navband {
  height: 63px;
  background: #03223c;
  border-bottom: 1px solid #8a96a3;
  display: flex;
  align-items: flex-start;
  padding: 4px 0 0 16px;
}
.navbtn {
  height: 51px;
  background: #02205e;
  border-radius: 8px;
  display: flex;
  color: #fff;
}
.n1 { width: 265px; }
.n2 { width: 246px; margin-left: 64px; }
.n3 { width: 247px; margin-left: 66px; }
.n4 { width: 239px; margin-left: 85px; }
.n5 { width: 238px; margin-left: 69px; }
.n6 { width: 239px; margin-left: 63px; }
.nav-ic {
  width: 58px;
  background: #0f2f7f;
  border-radius: 8px;
  display: flex;
  align-items: center;
  justify-content: center;
  flex: none;
}
.n1 .nav-ic { width: 63px; }
.coin { font: bold 12px "Liberation Sans", sans-serif; fill: #00b050; stroke: none; text-anchor: middle; }
.coin.dark { fill: #0f2f7f; font-size: 13px; }
.nav-txt {
  flex: 1;
  padding-left: 4px;
  text-align: center;
  font: bold 18px/54px "DejaVu Serif", serif;
}
.nav-txt.current { text-decoration: underline; }

.content { display: flex; padding: 10px 0 0 14px; }
.analysis { width: 1378px; flex: none; }
.banner {
  margin: 0 0 5px 4px;
  height: 51px;
  background: #02205e;
  border-radius: 4px 10px 10px 4px;
  border-bottom: 1px solid #4a76c0;
  text-align: center;
  font: 400 33.900px/50px "Liberation Sans", sans-serif;
  color: #00b050;
}
.cards {
  display: grid;
  grid-template-columns: 411px 479px 484px;
  row-gap: 28px;
}
.card { display: flex; flex-direction: column; height: 150px; background: #0d3280; }
.cards .card:nth-child(n+4) { height: 151px; }
.card:nth-child(3n+2) { margin-left: 108px; }
.card:nth-child(3n) { margin-left: 88px; }
.card h3 {
  margin: 0;
  height: 59px;
  background: #02205e;
  color: #fff;
  text-align: center;
  font: bold 36px/60px "Lato", sans-serif;
}
.card p {
  margin: 0;
  flex: 1;
  text-align: center;
  font: bold 34px/91px "Lato", sans-serif;
  color: #00b050;
}

.chart {
  margin: 1px 0 0 6px;
  width: 436px;
  height: 386px;
  border: 1px solid #e0e0e0;
  background: repeating-linear-gradient(-45deg, #f3f3f3 0 2px, #fcfcfc 2px 4px);
  display: flex;
  flex-direction: column;
  align-items: center;
  padding-top: 13px;
}
.chart figcaption { font: bold 31.500px/42px "Lato", sans-serif; color: #595959; }
.donut { margin-top: 20px; overflow: visible; filter: drop-shadow(0 0 10px rgba(0,0,0,.22)); }
.donut-lbl text { font: 15px "Lato", sans-serif; fill: #fff; text-anchor: middle; }
.legend {
  list-style: none;
  margin: 17px 0 0;
  padding: 0 0 0 6px;
  width: 352px;
  height: 59px;
  background: rgba(255,255,255,.75);
  display: grid;
  grid-template-columns: 119px 116px 1fr;
  grid-auto-rows: 32px;
  font: 16px/30px "Lato", sans-serif;
  color: #595959;
}
.legend li { display: flex; align-items: center; gap: 3px; white-space: nowrap; }
.legend i { width: 10px; height: 10px; }
.s1 { background: #4472c4; }
.s2 { background: #ed7d31; }
.s3 { background: #a5a5a5; }
.s4 { background: #ffc000; }
.s5 { background: #5b9bd5; }
.s6 { background: #70ad47; }

.vscroll {
  width: 30px;
  margin-top: -26px;
  height: 663px;
  background: #e6e6e6;
  display: flex;
  flex-direction: column;
  padding: 4px 3px 1px 5px;
}
.sb-btn {
  height: 20px;
  background: #fff;
  border: 1px solid #bbb;
  display: flex;
  align-items: center;
  justify-content: center;
  flex: none;
}
.sb-thumb { height: 24px; background: #fff; border: 1px solid #bbb; border-top: 0; flex: none; }
.sb-track { flex: 1; background: #d8d8d8; }

/* sheet tabs */
.sheetbar {
  position: relative;
  height: 39px;
  background: #e6e6e6;
  border-top: 2px solid #b5b5b5;
  border-bottom: 2px solid #cfcfcf;
  display: flex;
  align-items: stretch;
  font-size: 17px;
  color: #444;
}
.sheet-nav { width: 141px; display: flex; align-items: center; padding-left: 38px; gap: 36px; }
.stab {
  text-align: center;
  border-left: 1px solid #9b9b9b;
  margin: 5px 0 4px;
  line-height: 25px;
}
.t1 { width: 135px; }
.t2 { width: 117px; }
.t3 { width: 102px; }
.t4 { width: 114px; }
.t5 { width: 124px; }
.stab.active {
  width: 155px;
  margin: 0;
  background: #fff;
  color: #217346;
  font-weight: 700;
  line-height: 32px;
  border: 0;
  border-bottom: 3px solid #217346;
}
.addsheet { display: flex; align-items: center; margin-left: 46px; }
.split-dots { position: absolute; left: 1147px; top: 5px; color: #999; }
.hscroll {
  position: absolute;
  left: 1175px;
  top: 8px;
  width: 711px;
  height: 21px;
  display: flex;
}
.hs-btn {
  width: 21px;
  background: #fff;
  border: 1px solid #bbb;
  display: flex;
  align-items: center;
  justify-content: center;
}
.hs-thumb { width: 278px; background: #fff; border: 1px solid #bbb; }
.hs-track { flex: 1; background: #d6d6d6; }

/* status bar */
.statusbar {
  height: 30px;
  background: #f3f2f1;
  display: flex;
  align-items: center;
  font-size: 15px;
  color: #555;
  padding-left: 11px;
}
.status-txt { width: 1488px; }
.view { width: 56px; height: 30px; display: flex; align-items: center; justify-content: center; }
.view.on { width: 55px; background: #c8c8c8; }
.zoom { display: flex; align-items: center; margin-left: 9px; gap: 6px; font-size: 18px; }
.zoom-plus { margin-left: 3px; }
.slider { position: relative; width: 140px; height: 1px; background: #888; display: block; }
.slider i { position: absolute; left: 71px; top: -8px; width: 6px; height: 17px; background: #777; }
.zoom-pct { margin-left: 21px; font-size: 14px; }

.taskbar { height: 12px; display: flex; overflow: hidden; }
.tk-a { width: 69px; background: #cbcbcb; }
.tk-b { width: 402px; background: #fff; position: relative; overflow: hidden; }
.dome {
  position: absolute;
  left: 326px;
  top: 0;
  width: 40px;
  height: 24px;
  border-radius: 50%;
  background: #e8b84a;
}
.tk-c { width: 486px; background: #d0dbe4; }
.tk-d { width: 67px; background: #fff; }
.tk-e {
  width: 891px;
  background: linear-gradient(90deg, #d0dbe4, #d5dfe0);
  display: flex;
  justify-content: flex-end;
  gap: 36px;
  padding: 8px 100px 0 0;
  font-size: 14px;
  color: #222;
}
.tk-e b { font-weight: 400; line-height: 16px; }
```
